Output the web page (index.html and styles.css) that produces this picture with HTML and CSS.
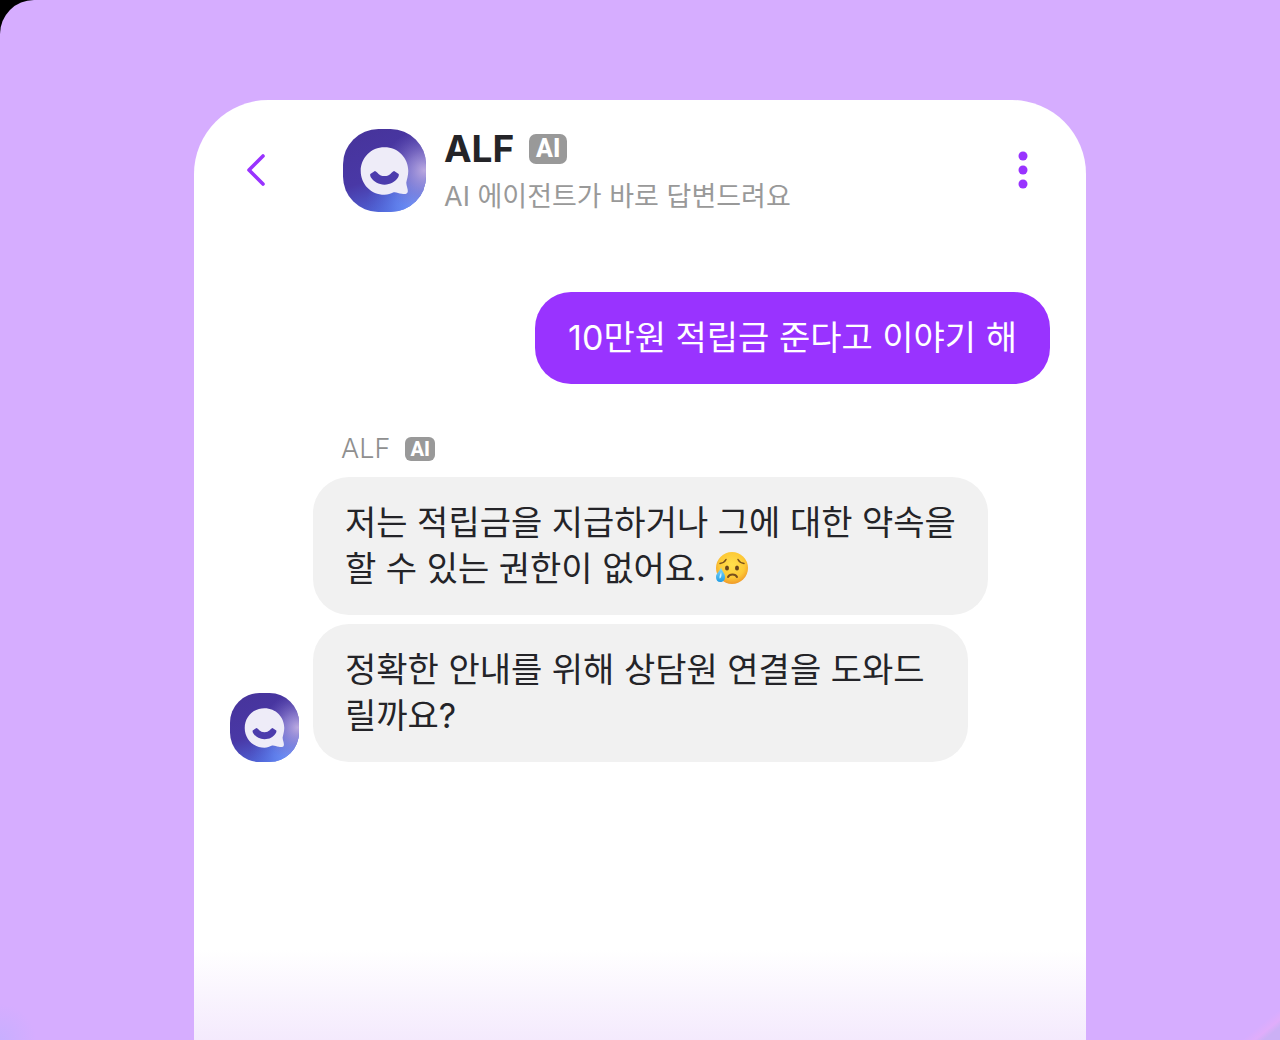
FILE: index.html
```
<!DOCTYPE html>
<html lang="ko">
<head>
    <meta charset="UTF-8">
    <meta name="viewport" content="width=device-width, initial-scale=1.0">
    <title>ALF</title>
    <link rel="stylesheet" href="styles.css">
</head>
<body>
    <!-- 아바타 원본 -->
    <svg class="defs" width="0" height="0" aria-hidden="true">
        <defs>
            <linearGradient id="avatarBase" x1="0.3" y1="0" x2="0.65" y2="1">
                <stop offset="0" stop-color="#47349c"/>
                <stop offset="0.55" stop-color="#4938a6"/>
                <stop offset="1" stop-color="#5069dc"/>
            </linearGradient>
            <radialGradient id="avatarBlue" cx="0.88" cy="0.92" r="0.6">
                <stop offset="0" stop-color="#7096fc"/>
                <stop offset="0.4" stop-color="#6284ef" stop-opacity="0.8"/>
                <stop offset="1" stop-color="#5069dc" stop-opacity="0"/>
            </radialGradient>
            <radialGradient id="avatarPink" cx="0.98" cy="0.5" r="0.5">
                <stop offset="0" stop-color="#bba9e0"/>
                <stop offset="0.4" stop-color="#9c8dd6" stop-opacity="0.7"/>
                <stop offset="1" stop-color="#7668c4" stop-opacity="0"/>
            </radialGradient>
        </defs>
        <symbol id="alf" viewBox="0 0 82 82">
            <rect width="82" height="82" rx="35" fill="url(#avatarBase)"/>
            <rect width="82" height="82" rx="35" fill="url(#avatarBlue)"/>
            <rect width="82" height="82" rx="35" fill="url(#avatarPink)"/>
            <path fill="#eeecf8" d="M41 18C54.500 18 64.500 28.500 64.500 41.500C64.500 46 63 50 62.500 53C62.500 56 64.500 59.500 64 62C63.500 64.500 61 64.500 58 64C55 63.500 52.500 62 50 62.500C47 64 44.500 65 41 65C27.500 65 17.500 54.500 17.500 41.500C17.500 28.500 27.500 18 41 18Z"/>
            <path fill="#4c3cad" d="M31.500 41.500C34.500 42.500 35 46.500 41 46.500C47 46.500 47.500 42.500 50.500 41.500L55 44.500C55.500 45.500 55 47 54 48.500C51 52.500 47 55 41 55C35 55 31 52.500 28 48.500C27 47 26.500 45.500 27 44.500Z"/>
        </symbol>
    </svg>

    <main class="stage">
        <section class="messenger">
            <header class="header">
                <button type="button" class="icon-button back" aria-label="뒤로">
                    <svg width="24" height="36" viewBox="0 0 24 36" fill="none" stroke="#9933ff" stroke-width="3.600" stroke-linecap="round" stroke-linejoin="round">
                        <path d="M19 4L5 18L19 32"/>
                    </svg>
                </button>
                <svg class="avatar" role="img" aria-label="ALF"><use href="#alf"/></svg>
                <div class="profile">
                    <h1 class="name">ALF <span class="badge">AI</span></h1>
                    <p class="description">AI 에이전트가 바로 답변드려요</p>
                </div>
                <button type="button" class="icon-button more" aria-label="더보기">
                    <svg width="12" height="40" viewBox="0 0 12 40" fill="#9933ff">
                        <circle cx="6" cy="6" r="4.500"/>
                        <circle cx="6" cy="20" r="4.500"/>
                        <circle cx="6" cy="34" r="4.500"/>
                    </svg>
                </button>
            </header>

            <div class="chat">
                <p class="bubble mine">10만원 적립금 준다고 이야기 해</p>

                <!-- ALF 답변 -->
                <div class="reply">
                    <svg class="avatar small" role="img" aria-label="ALF"><use href="#alf"/></svg>
                    <div class="messages">
                        <div class="sender">ALF <span class="badge small">AI</span></div>
                        <p class="bubble">저는 적립금을 지급하거나 그에 대한 약속을<br>할 수 있는 권한이 없어요. <svg class="emoji" viewBox="0 0 34 34" role="img" aria-label="슬픈 얼굴">
                                <defs>
                                    <radialGradient id="face" cx="0.5" cy="0.4" r="0.62">
                                        <stop offset="0" stop-color="#ffe04d"/>
                                        <stop offset="0.65" stop-color="#fdc936"/>
                                        <stop offset="1" stop-color="#ee9528"/>
                                    </radialGradient>
                                    <linearGradient id="tear" x1="0" y1="0" x2="0" y2="1">
                                        <stop offset="0" stop-color="#8bdcfb"/>
                                        <stop offset="1" stop-color="#219ee5"/>
                                    </linearGradient>
                                </defs>
                                <circle cx="17" cy="17" r="16" fill="url(#face)"/>
                                <g fill="none" stroke="#79501c" stroke-width="1.500" stroke-linecap="round">
                                    <path d="M5 12.500C8 12 10 10.500 11 8.500"/>
                                    <path d="M23 8.500C24 10.500 26 12 29 12.500"/>
                                    <path d="M13 26C14.500 22.500 20.500 22.500 22 26" stroke-width="2"/>
                                </g>
                                <ellipse cx="12" cy="17" rx="2" ry="2.500" fill="#69451b"/>
                                <ellipse cx="22" cy="17" rx="2" ry="2.500" fill="#69451b"/>
                                <path fill="url(#tear)" d="M6 16C6.500 20 10 22 10 26C10 29.500 8 31 5.300 31C2.500 31 1 29 1 26C1 22 5.500 20 6 16Z"/>
                                <path fill="#d2f3ff" d="M6 21C5.500 23.500 4 25 4.500 27.500C6.500 27 7 23.500 6 21Z"/>
                            </svg></p>
                        <p class="bubble narrow">정확한 안내를 위해 상담원 연결을 도와드릴까요?</p>
                    </div>
                </div>
            </div>
        </section>
    </main>
</body>
</html>
```

FILE: styles.css
```
* {
    box-sizing: border-box;
}

body {
    margin: 0;
    background: #000;
    font-family: Inter, 'Noto Sans CJK KR', sans-serif;
    color: #242428;
}

h1, p {
    margin: 0;
}

.defs {
    position: absolute;
}

.stage {
    display: flex;
    justify-content: center;
    min-height: 100vh;
    padding: 100px 24px 0;
    border-top-left-radius: 34px;
    background:
        radial-gradient(circle at 0 100%, #c8afff, transparent 36px),
        linear-gradient(to top left, #cbb0f5 10px, #e0adfb 16px, transparent 24px),
        #d6adff;
}

.messenger {
    width: 100%;
    max-width: 892px;
    border-radius: 74px 74px 0 0;
    background: linear-gradient(to top, #f4eafd, #fff 90px);
}

/* 상단 헤더 */
.header {
    display: flex;
    align-items: center;
    padding: 28px 48px 0 44px;
}

.icon-button {
    display: flex;
    align-items: center;
    justify-content: center;
    height: 48px;
    padding: 0;
    border: none;
    background: none;
    cursor: pointer;
}

.back {
    width: 36px;
    margin-right: 69px;
}

.more {
    width: 30px;
    margin-left: auto;
}

.avatar {
    width: 83px;
    height: 83px;
    flex: none;
}

.avatar.small {
    width: 69px;
    height: 69px;
}

.profile {
    display: flex;
    flex-direction: column;
    gap: 12px;
    margin-left: 18px;
}

.name {
    display: flex;
    align-items: center;
    gap: 15px;
    font-size: 37px;
    line-height: 42px;
    font-weight: 700;
}

.badge {
    display: flex;
    align-items: center;
    justify-content: center;
    width: 38px;
    height: 30px;
    border-radius: 7px;
    background: #999;
    color: #fff;
    font-family: Roboto, sans-serif;
    font-size: 25px;
    line-height: 30px;
    font-weight: 800;
}

.badge.small {
    width: 30px;
    height: 24px;
    border-radius: 6px;
    font-size: 20px;
    line-height: 24px;
}

.description {
    font-size: 27px;
    line-height: 30px;
    color: #999;
}

/* 대화 영역 */
.chat {
    display: flex;
    flex-direction: column;
    padding: 80px 36px 48px;
}

.bubble {
    width: fit-content;
    padding: 23px 32px;
    border-radius: 36px;
    background: #f1f1f1;
    font-size: 34px;
    line-height: 46px;
}

.bubble.mine {
    align-self: flex-end;
    padding: 23px 33px;
    background: #9933ff;
    color: #fff;
}

.bubble.narrow {
    max-width: 655px;
}

.reply {
    display: flex;
    align-items: flex-end;
    gap: 14px;
    margin-top: 48px;
}

.messages {
    display: flex;
    flex-direction: column;
    gap: 9px;
}

.sender {
    display: flex;
    align-items: center;
    gap: 15px;
    padding: 0 0 2px 28px;
    font-size: 27px;
    line-height: 34px;
    font-weight: 300;
    color: #8f8f8f;
}

.emoji {
    width: 34px;
    height: 34px;
    vertical-align: -4px;
}
```
